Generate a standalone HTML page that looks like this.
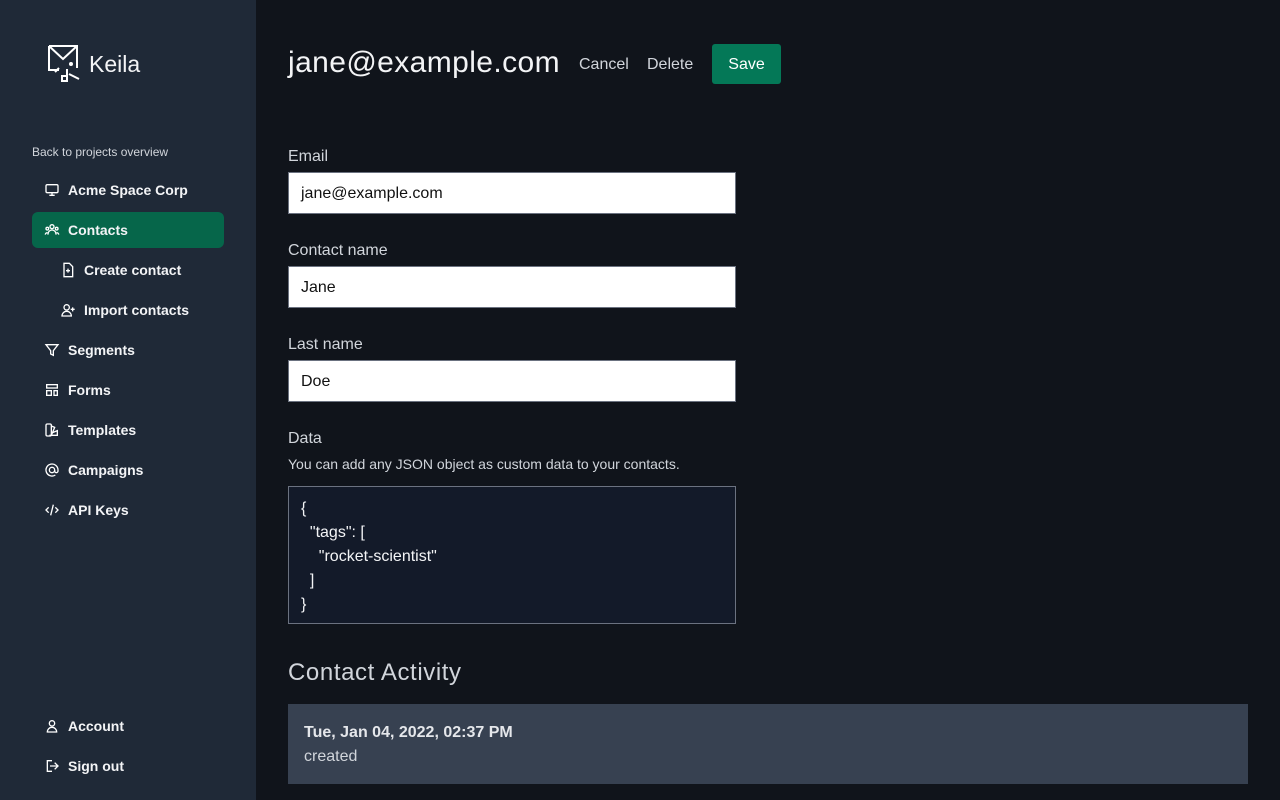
<!DOCTYPE html>
<html><head><style>
*{box-sizing:border-box;margin:0;padding:0}
body{width:1280px;height:800px;overflow:hidden;background:#10141b;font-family:"Liberation Sans",sans-serif;color:#e5e7eb;position:relative}
.side{position:absolute;left:0;top:0;width:256px;height:800px;background:#1f2937}
.logo{position:absolute;left:47px;top:44px;display:flex;align-items:center}
.logo span{font-size:23px;color:#f3f4f6;margin-left:4px;margin-top:2px}
.back{position:absolute;left:32px;top:145px;font-size:12px;color:#d1d5db}
.nav{position:absolute;left:32px;width:192px;height:36px;display:flex;align-items:center;font-size:14px;font-weight:bold;color:#f3f4f6;border-radius:6px}
.nav svg{margin-left:12px;margin-right:8px}
.nav.sub svg{margin-left:28px}
.nav.act{background:#06664a}
h1{position:absolute;left:288px;top:46px;font-size:30px;font-weight:normal;color:#f3f4f6;letter-spacing:0.4px}
.hb{position:absolute;top:56px;font-size:16px;color:#d1d5db}
.save{position:absolute;left:712px;top:44px;width:69px;height:40px;background:#047857;border-radius:3px;color:#fff;font-size:16px;text-align:center;line-height:41px}
.lbl{position:absolute;left:288px;font-size:16px;color:#d1d5db}
.inp{position:absolute;left:288px;width:448px;height:42px;background:#fff;border:1px solid #6b7280;color:#111;font-size:16px;padding:0 12px;line-height:42px}
.ta{position:absolute;left:288px;top:486px;width:448px;height:138px;background:#131a29;border:1px solid #6b7280;font-size:16px;color:#f3f4f6;padding:10px 12px;line-height:24px;white-space:pre}
.act2{position:absolute;left:288px;top:704px;width:960px;height:80px;background:#374151;padding:20px 16px}
</style></head><body>
<div class="side">
 <div class="logo"><svg width="38" height="38" viewBox="0 0 38 38" fill="none" stroke="#fff" stroke-width="2"><path d="M2 2h28v22M2 2v24h10M2 2l14 13 14-13M12 24l-4 4"/><path d="M20 25v12h-5v-5h4M22 30l10 5"/><circle cx="24" cy="20" r="1" fill="#fff"/></svg><span>Keila</span></div>
 <div class="back">Back to projects overview</div>
 <div class="nav" style="top:172px"><svg width="16" height="16" viewBox="0 0 24 24" fill="none" stroke="#fff" stroke-width="2"><rect x="3" y="4" width="18" height="12" rx="2"/><path d="M8 20h8M12 16v4"/></svg>Acme Space Corp</div>
 <div class="nav act" style="top:212px"><svg width="16" height="16" viewBox="0 0 24 24" fill="none" stroke="#fff" stroke-width="2"><circle cx="12" cy="7" r="3"/><circle cx="5" cy="10" r="2"/><circle cx="19" cy="10" r="2"/><path d="M6 19v-1a6 6 0 0112 0v1M2 19a3 3 0 013-3M22 19a3 3 0 00-3-3"/></svg>Contacts</div>
 <div class="nav sub" style="top:252px"><svg width="16" height="16" viewBox="0 0 24 24" fill="none" stroke="#fff" stroke-width="2"><path d="M6 2h8l5 5v15H6z"/><path d="M12 10v6M9 13h6"/></svg>Create contact</div>
 <div class="nav sub" style="top:292px"><svg width="16" height="16" viewBox="0 0 24 24" fill="none" stroke="#fff" stroke-width="2"><circle cx="10" cy="8" r="4"/><path d="M3 21a7 7 0 0114 0zM19 8v6M16 11h6"/></svg>Import contacts</div>
 <div class="nav" style="top:332px"><svg width="16" height="16" viewBox="0 0 24 24" fill="none" stroke="#fff" stroke-width="2"><path d="M3 4h18l-7 9v7l-4-2v-5z"/></svg>Segments</div>
 <div class="nav" style="top:372px"><svg width="16" height="16" viewBox="0 0 24 24" fill="none" stroke="#fff" stroke-width="2"><rect x="4" y="4" width="16" height="5"/><rect x="4" y="13" width="7" height="7"/><rect x="15" y="13" width="5" height="7"/></svg>Forms</div>
 <div class="nav" style="top:412px"><svg width="16" height="16" viewBox="0 0 24 24" fill="none" stroke="#fff" stroke-width="2"><rect x="3" y="3" width="8" height="18" rx="2"/><path d="M11 6l5 2-5 12M13 16l7-3v7H8"/></svg>Templates</div>
 <div class="nav" style="top:452px"><svg width="16" height="16" viewBox="0 0 24 24" fill="none" stroke="#fff" stroke-width="2"><circle cx="12" cy="12" r="4"/><path d="M16 12v1.5a2.5 2.5 0 005 0V12a9 9 0 10-4 7.5"/></svg>Campaigns</div>
 <div class="nav" style="top:492px"><svg width="16" height="16" viewBox="0 0 24 24" fill="none" stroke="#fff" stroke-width="2"><path d="M7 8l-4 4 4 4M17 8l4 4-4 4M14 4l-4 16"/></svg>API Keys</div>
 <div class="nav" style="top:708px"><svg width="16" height="16" viewBox="0 0 24 24" fill="none" stroke="#fff" stroke-width="2"><circle cx="12" cy="8" r="4"/><path d="M5 21a7 7 0 0114 0z"/></svg>Account</div>
 <div class="nav" style="top:748px"><svg width="16" height="16" viewBox="0 0 24 24" fill="none" stroke="#fff" stroke-width="2"><path d="M16 17l5-5-5-5M21 12H9M12 20H5V4h7"/></svg>Sign out</div>
</div>
<h1>jane@example.com</h1>
<div class="hb" style="left:579px">Cancel</div>
<div class="hb" style="left:647px">Delete</div>
<div class="save">Save</div>
<div class="lbl" style="top:148px">Email</div>
<div class="inp" style="top:172px">jane@example.com</div>
<div class="lbl" style="top:242px">Contact name</div>
<div class="inp" style="top:266px">Jane</div>
<div class="lbl" style="top:336px">Last name</div>
<div class="inp" style="top:360px">Doe</div>
<div class="lbl" style="top:430px">Data</div>
<div class="lbl" style="top:456px;font-size:14px">You can add any JSON object as custom data to your contacts.</div>
<div class="ta">{
  "tags": [
    "rocket-scientist"
  ]
}</div>
<div class="lbl" style="top:659px;font-size:24px;letter-spacing:0.6px">Contact Activity</div>
<div class="act2"><div style="font-weight:bold;font-size:16px;color:#e5e7eb">Tue, Jan 04, 2022, 02:37 PM</div><div style="font-size:16px;color:#d1d5db;margin-top:6px">created</div></div>
</body></html>
